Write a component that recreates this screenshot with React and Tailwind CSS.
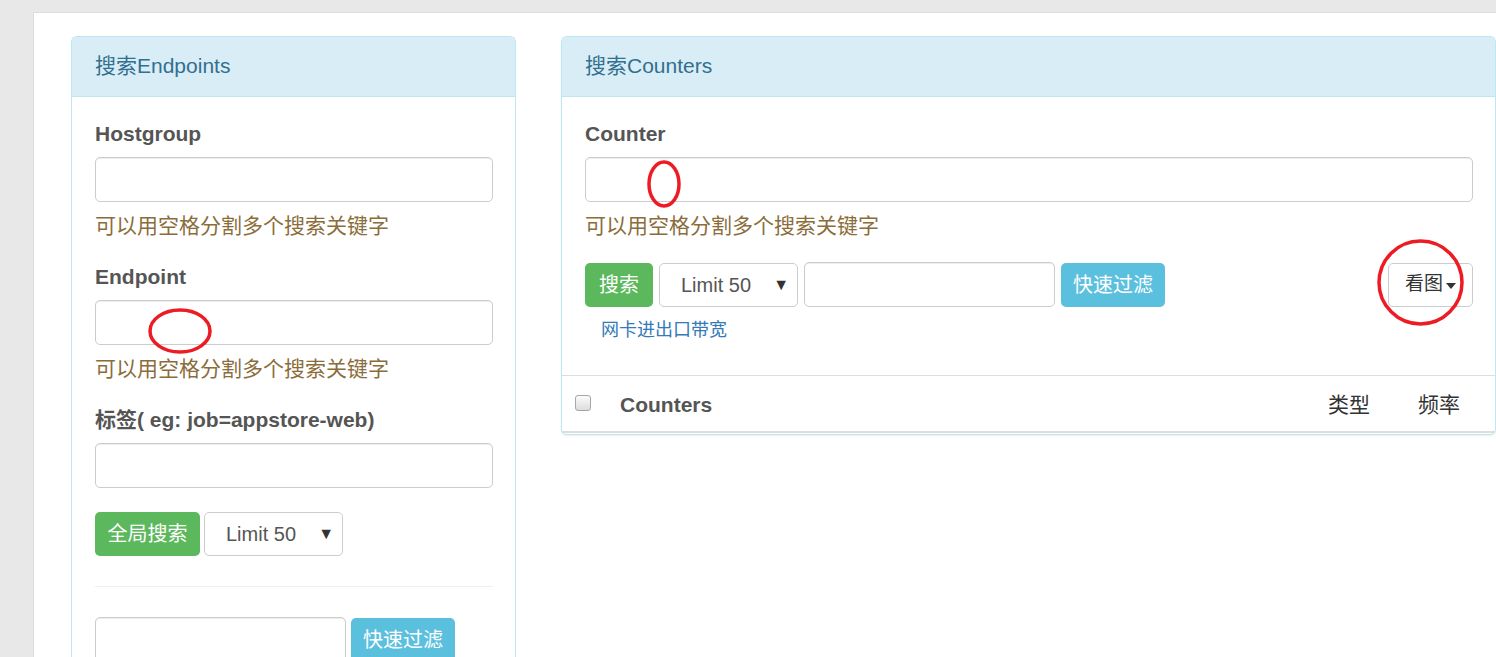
import React from "react";

const FONT = { fontFamily: '"Liberation Sans", Arial, "Noto Sans CJK SC", sans-serif' };

function Label({ children }) {
  return (
    <div className="text-[21px] leading-[30px] font-bold text-[#555]">{children}</div>
  );
}

function Input({ className = "" }) {
  return (
    <div
      className={
        "h-[45px] rounded-[5px] border border-[#ccc] bg-white shadow-[inset_0_1px_1px_rgba(0,0,0,0.075)] " +
        className
      }
    />
  );
}

function Hint() {
  return (
    <div className="mt-[9px] text-[21px] leading-[30px] text-[#8a6d3b]">可以用空格分割多个搜索关键字</div>
  );
}

function SelectBox() {
  return (
    <div className="flex h-[44px] w-[139px] items-center justify-between rounded-[5px] border border-[#ccc] bg-white pl-[21px] pr-[8px] text-[20px] text-[#555]">
      <span>Limit 50</span>
      <span className="text-[16px] text-[#333]">▼</span>
    </div>
  );
}

function Btn({ children, color, w }) {
  return (
    <div
      className={
        "flex h-[44px] items-center justify-center rounded-[5px] text-[20px] text-white " + color + " " + w
      }
    >
      {children}
    </div>
  );
}

function PanelHeader({ children }) {
  return (
    <div className="flex h-[60px] items-center border-b border-[#bce8f1] bg-[#d9edf7] px-[23px] pb-[1px] text-[21px] text-[#31708f]">
      {children}
    </div>
  );
}

function Ellipse({ left, top, w, h }) {
  return (
    <svg
      className="absolute"
      style={{ left, top }}
      width={w}
      height={h}
      viewBox={`0 0 ${w} ${h}`}
    >
      <ellipse cx={w / 2} cy={h / 2} rx={w / 2 - 2} ry={h / 2 - 2} fill="none" stroke="#ed1c24" strokeWidth="3.5" />
    </svg>
  );
}

export default function App() {
  return (
    <div className="relative h-[657px] w-[1496px] overflow-hidden bg-[#e8e8e8] pl-[33px] pt-[12px]" style={FONT}>
      <div className="flex h-[700px] w-[1463px] gap-[45px] border-l border-t border-[#dedede] bg-white pl-[37px] pt-[23px]">
        {/* Left panel */}
        <div className="h-[700px] w-[445px] shrink-0 rounded-t-[6px] border border-[#bce8f1] bg-white">
          <PanelHeader>搜索Endpoints</PanelHeader>
          <div className="pl-[23px] pr-[22px] pt-[22px]">
            <Label>Hostgroup</Label>
            <Input className="mt-[8px]" />
            <Hint />
            <div className="mt-[21px]">
              <Label>Endpoint</Label>
            </div>
            <Input className="mt-[8px]" />
            <Hint />
            <div className="mt-[21px]">
              <Label>标签( eg: job=appstore-web)</Label>
            </div>
            <Input className="mt-[8px]" />
            <div className="mt-[24px] flex gap-[4px]">
              <Btn color="bg-[#5cb85c]" w="w-[105px]">全局搜索</Btn>
              <SelectBox />
            </div>
            <div className="mt-[30px] border-t border-[#eee]" />
            <div className="mt-[30px] flex gap-[5px]">
              <Input className="w-[251px]" />
              <div className="pt-[1px]">
                <Btn color="bg-[#5bc0de]" w="w-[104px]">快速过滤</Btn>
              </div>
            </div>
          </div>
        </div>

        {/* Right panel */}
        <div className="h-[399px] w-[935px] shrink-0 rounded-[6px] border border-[#bce8f1] bg-white shadow-[0_1px_2px_rgba(0,0,0,0.08)]">
          <PanelHeader>搜索Counters</PanelHeader>
          <div className="pl-[23px] pr-[22px] pt-[22px]">
            <Label>Counter</Label>
            <Input className="mt-[8px]" />
            <Hint />
            <div className="mt-[21px] flex items-center">
              <Btn color="bg-[#5cb85c]" w="w-[68px]">搜索</Btn>
              <div className="ml-[6px]">
                <SelectBox />
              </div>
              <Input className="ml-[6px] w-[251px]" />
              <div className="ml-[6px]">
                <Btn color="bg-[#5bc0de]" w="w-[104px]">快速过滤</Btn>
              </div>
              <div className="ml-auto flex h-[44px] w-[85px] items-center justify-center gap-[3px] rounded-[5px] border border-[#ccc] bg-white text-[19px] text-[#333]">
                <span>看图</span>
                <span className="mt-[2px] h-0 w-0 border-x-[5px] border-t-[6px] border-x-transparent border-t-[#333]" />
              </div>
            </div>
            <div className="mt-[11px] pl-[16px] text-[18px] leading-[24px] text-[#337ab7]">网卡进出口带宽</div>
          </div>
          <div className="mt-[33px] border-t border-[#ddd]" />
          <div className="flex h-[57px] items-center border-b-[2px] border-[#ddd] pl-[13px] pr-[35px] pt-[2px] text-[21px] text-[#333]">
            <div className="mb-[4px] h-[16px] w-[16px] rounded-[3px] border border-[#a6a6a6] bg-gradient-to-b from-[#fcfcfc] to-[#dcdcdc]" />
            <div className="ml-[29px] font-bold text-[#555]">Counters</div>
            <div className="ml-auto">类型</div>
            <div className="ml-[48px]">频率</div>
          </div>
        </div>
      </div>

      <Ellipse left={148} top={308} w={64} h={46} />
      <Ellipse left={647} top={160} w={34} h={48} />
      <Ellipse left={1377} top={239} w={87} h={87} />
    </div>
  );
}
